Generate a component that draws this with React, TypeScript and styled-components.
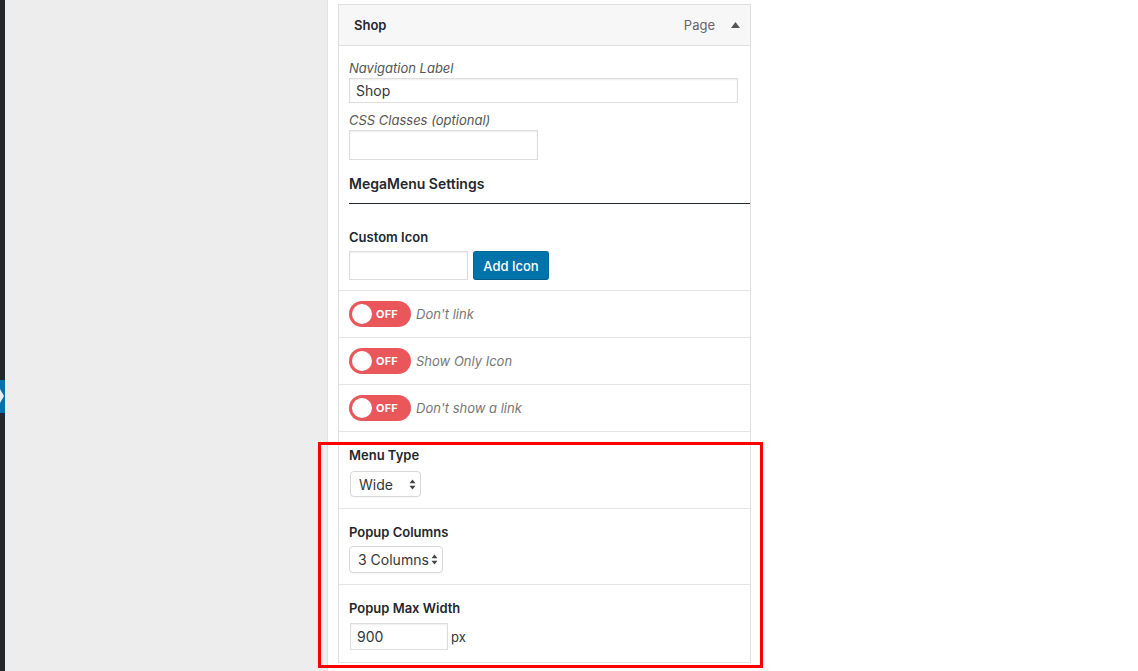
import React from "react";
import styled, { createGlobalStyle } from "styled-components";

const GlobalStyle = createGlobalStyle`
  html, body { margin: 0; padding: 0; background: #fff; }
  body { font-family: Inter, "Noto Sans", Roboto, sans-serif; color: #23282d; -webkit-font-smoothing: antialiased; }
  * { box-sizing: border-box; }
`;

const Page = styled.div`
  position: relative;
  display: flex;
  height: 671px;
  overflow: hidden;
`;

const AdminMenu = styled.div`
  width: 5px;
  flex: none;
  background: #23282d;
  padding-top: 380px;
`;

const CurrentMark = styled.div`
  position: relative;
  height: 33px;
  background: #0073aa;
  &::after {
    content: "";
    position: absolute;
    left: 0;
    top: 9px;
    border-style: solid;
    border-width: 7px 4px 7px 0;
    border-color: transparent #ededed transparent transparent;
    transform: scaleX(-1);
  }
`;

const GreyArea = styled.div`
  width: 323px;
  flex: none;
  background: #ededed;
  border-right: 1px solid #e1e1e1;
`;

const Main = styled.main`
  flex: 1;
  padding: 4px 0 0 10px;
`;

const Panel = styled.section`
  width: 413px;
  border: 1px solid #dfdfdf;
  border-bottom: none;
  background: #fff;
`;

const Header = styled.header`
  height: 41px;
  display: flex;
  align-items: center;
  padding: 0 10px 0 15px;
  background: #f7f7f7;
  border-bottom: 1px solid #dfdfdf;
`;

const Title = styled.span`
  font-size: 13px;
  font-weight: 600;
  color: #23282d;
  flex: 1;
`;

const ItemType = styled.span`
  font-size: 13px;
  color: #666;
  margin-right: 16px;
`;

const FieldsBlock = styled.div`
  padding: 13px 0 0 10px;
`;

const ItalicLabel = styled.div<{ $gap?: number }>`
  font-size: 13px;
  line-height: 18px;
  font-style: italic;
  color: #555;
  margin-top: ${(p) => p.$gap ?? 0}px;
`;

const TextInput = styled.input<{ $w: number; $h: number; $mt?: number }>`
  display: block;
  width: ${(p) => p.$w}px;
  height: ${(p) => p.$h}px;
  margin-top: ${(p) => p.$mt ?? 0}px;
  border: 1px solid #dddddd;
  box-shadow: inset 0 1px 2px rgba(0, 0, 0, 0.07);
  background: #fff;
  font: inherit;
  font-size: 14px;
  color: #32373c;
  padding: 0 6px;
  outline: none;
`;

const SettingsHeading = styled.h3`
  margin: 15px 0 0;
  font-size: 14px;
  line-height: 18px;
  font-weight: 600;
  color: #23282d;
  padding-bottom: 10px;
  border-bottom: 1px solid #23282d;
`;

const Section = styled.div<{ $pt: number; $pb: number }>`
  padding: ${(p) => p.$pt}px 10px ${(p) => p.$pb}px 10px;
  border-bottom: 1px solid #e5e5e5;
`;

const BoldLabel = styled.div<{ $mb: number }>`
  font-size: 13px;
  line-height: 18px;
  font-weight: 600;
  color: #23282d;
  margin-bottom: ${(p) => p.$mb}px;
`;

const Controls = styled.div<{ $gap?: number }>`
  display: flex;
  align-items: center;
  gap: ${(p) => p.$gap ?? 5}px;
`;

const Button = styled.button`
  height: 29px;
  width: 76px;
  padding: 0;
  border: 1px solid #006799;
  border-bottom-color: #005a87;
  border-radius: 3px;
  background: #0073aa;
  color: #fff;
  font: inherit;
  font-size: 13px;
  font-weight: 500;
`;

const ToggleRow = styled.div`
  display: flex;
  align-items: center;
  gap: 5px;
  padding: 10px 10px;
  border-bottom: 1px solid #e5e5e5;
`;

const Toggle = styled.div`
  width: 62px;
  height: 26px;
  border-radius: 13px;
  background: #e9575b;
  display: flex;
  align-items: center;
  padding-left: 3px;
  gap: 4px;
`;

const Knob = styled.span`
  width: 20px;
  height: 20px;
  border-radius: 50%;
  background: #fff;
`;

const ToggleText = styled.span`
  font-size: 11px;
  font-weight: 700;
  color: #fff;
  letter-spacing: 0.2px;
`;

const ToggleCaption = styled.span`
  font-size: 13px;
  font-style: italic;
  color: #777;
`;

const Select = styled.div<{ $w: number; $h: number; $ml?: number }>`
  width: ${(p) => p.$w}px;
  height: ${(p) => p.$h}px;
  margin-left: ${(p) => p.$ml ?? 0}px;
  border: 1px solid #d8d8d8;
  border-radius: 4px;
  background: #fff;
  box-shadow: 0 1px 1px rgba(0, 0, 0, 0.04);
  display: flex;
  align-items: center;
  justify-content: space-between;
  padding: 0 4px 0 8px;
  font-size: 14px;
  color: #32373c;
`;

const Unit = styled.span`
  font-size: 13px;
  color: #32373c;
`;

const Highlight = styled.div`
  position: absolute;
  left: 318px;
  top: 442px;
  width: 445px;
  height: 226px;
  border: 3px solid #ff0000;
  pointer-events: none;
`;

const UpDown = () => (
  <svg width="7" height="11" viewBox="0 0 7 11">
    <path d="M3.5 0.5 L6.5 4.3 H0.5 Z M3.5 10.5 L6.5 6.7 H0.5 Z" fill="#444" />
  </svg>
);

const UpArrow = () => (
  <svg width="9" height="6" viewBox="0 0 9 6">
    <path d="M4.5 0 L9 6 H0 Z" fill="#555" />
  </svg>
);

const toggles = ["Don't link", "Show Only Icon", "Don't show a link"];

export default function App() {
  return (
    <>
      <GlobalStyle />
      <Page>
        <AdminMenu>
          <CurrentMark />
        </AdminMenu>
        <GreyArea />
        <Main>
          <Panel>
            <Header>
              <Title>Shop</Title>
              <ItemType>Page</ItemType>
              <UpArrow />
            </Header>
            <FieldsBlock>
              <ItalicLabel>Navigation Label</ItalicLabel>
              <TextInput $w={389} $h={25} $mt={1} defaultValue="Shop" />
              <ItalicLabel $gap={8}>CSS Classes (optional)</ItalicLabel>
              <TextInput $w={189} $h={30} $mt={1} />
              <SettingsHeading>MegaMenu Settings</SettingsHeading>
            </FieldsBlock>
            <Section $pt={24} $pb={10}>
              <BoldLabel $mb={5}>Custom Icon</BoldLabel>
              <Controls>
                <TextInput $w={119} $h={29} />
                <Button>Add Icon</Button>
              </Controls>
            </Section>
            {toggles.map((t) => (
              <ToggleRow key={t}>
                <Toggle>
                  <Knob />
                  <ToggleText>OFF</ToggleText>
                </Toggle>
                <ToggleCaption>{t}</ToggleCaption>
              </ToggleRow>
            ))}
            <Section $pt={14} $pb={11}>
              <BoldLabel $mb={7}>Menu Type</BoldLabel>
              <Select $w={71} $h={26} $ml={1}>
                <span>Wide</span>
                <UpDown />
              </Select>
            </Section>
            <Section $pt={14} $pb={11}>
              <BoldLabel $mb={5}>Popup Columns</BoldLabel>
              <Select $w={94} $h={27}>
                <span>3 Columns</span>
                <UpDown />
              </Select>
            </Section>
            <Section $pt={14} $pb={12}>
              <BoldLabel $mb={6}>Popup Max Width</BoldLabel>
              <Controls $gap={3}>
                <TextInput $w={98} $h={27} defaultValue="900" style={{ marginLeft: 1 }} />
                <Unit>px</Unit>
              </Controls>
            </Section>
          </Panel>
        </Main>
        <Highlight />
      </Page>
    </>
  );
}
